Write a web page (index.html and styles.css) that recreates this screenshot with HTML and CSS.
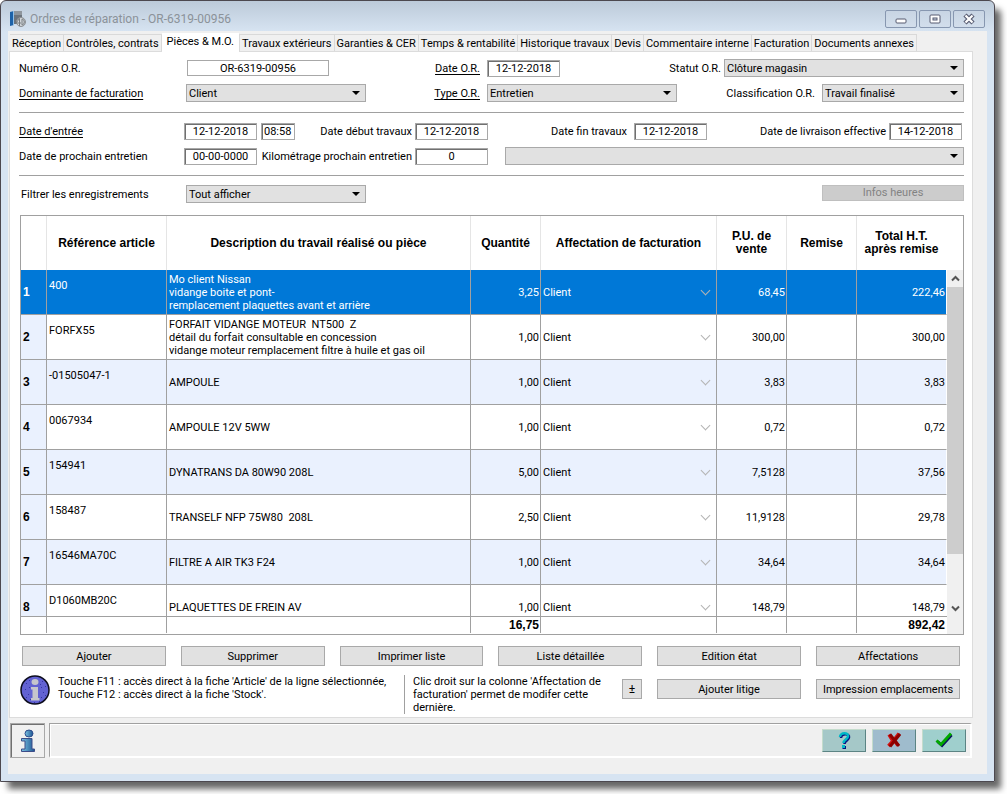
FILE: index.html
```html
<!DOCTYPE html>
<html lang="fr">
<head>
<meta charset="utf-8">
<title>Ordres de réparation - OR-6319-00956</title>
<link rel="stylesheet" href="styles.css">
</head>
<body>
<main class="window">
  <header class="titlebar">
    <svg class="app-icon" width="16" height="18" viewBox="0 0 16 18" aria-hidden="true">
      <path d="M0 2 4 1v14l-4 1z" fill="#1d62a8"/><path d="M3 1h1v14H3z" fill="#8fc0ea"/>
      <path d="M4 1h8v13H4z" fill="#6d747c"/><path d="M4 1h8v4H4z" fill="#8f969d"/>
      <circle cx="11" cy="12" r="4.500" fill="#d4d8dc" stroke="#8b8f93"/>
      <path d="M9.500 8.500 6 13h5M9.500 8.500V16M12 9v6c3 0 3-6 0-6" fill="none" stroke="#777c80"/>
    </svg>
    <h1 class="title">Ordres de réparation - OR-6319-00956</h1>
    <div class="win-controls">
      <button class="win-btn" aria-label="Réduire"><svg width="12" height="12" viewBox="0 0 12 12"><rect x="1" y="6" width="10" height="4" rx="1" fill="#fff" stroke="#565a70"/></svg></button>
      <button class="win-btn" aria-label="Agrandir"><svg width="12" height="12" viewBox="0 0 12 12"><rect x="1" y="2" width="10" height="8" rx="1" fill="#fff" stroke="#565a70"/><rect x="4" y="5" width="4" height="2" fill="#cfdae6" stroke="#565a70"/></svg></button>
      <button class="win-btn" aria-label="Fermer"><svg width="12" height="12" viewBox="0 0 12 12"><path d="M2 2l8 8M10 2l-8 8" stroke="#565a70" stroke-width="4.500"/><path d="M2.500 2.500l7 7M9.500 2.500l-7 7" stroke="#fff" stroke-width="2.200"/></svg></button>
    </div>
  </header>

  <div class="client">
    <nav class="tabs" role="tablist">
      <button class="tab" role="tab">Réception</button>
      <button class="tab" role="tab">Contrôles, contrats</button>
      <button class="tab tab-active" role="tab" aria-selected="true">Pièces &amp; M.O.</button>
      <button class="tab" role="tab">Travaux extérieurs</button>
      <button class="tab" role="tab">Garanties &amp; CER</button>
      <button class="tab" role="tab">Temps &amp; rentabilité</button>
      <button class="tab" role="tab">Historique travaux</button>
      <button class="tab" role="tab">Devis</button>
      <button class="tab" role="tab">Commentaire interne</button>
      <button class="tab" role="tab">Facturation</button>
      <button class="tab" role="tab">Documents annexes</button>
    </nav>

    <section class="panel">
      <div class="row row-number">
        <label for="num">Numéro O.R.</label>
        <input class="field field-flat" id="num" value="OR-6319-00956">
        <label class="end linked" for="dor">Date O.R.</label>
        <input class="field" id="dor" value="12-12-2018">
        <label class="end tight" for="statut">Statut O.R.</label>
        <span class="combo"><select id="statut"><option>Clôture magasin</option></select></span>
      </div>
      <div class="row row-type">
        <label class="linked" for="dom">Dominante de facturation</label>
        <span class="combo"><select id="dom"><option>Client</option></select></span>
        <label class="end linked" for="type">Type O.R.</label>
        <span class="combo"><select id="type"><option>Entretien</option></select></span>
        <label class="end" for="classif">Classification O.R.</label>
        <span class="combo"><select id="classif"><option>Travail finalisé</option></select></span>
      </div>
      <hr class="rule">
      <div class="row row-dates">
        <label class="linked" for="entree">Date d'entrée</label>
        <span class="pair"><input class="field" id="entree" value="12-12-2018"><input class="field field-time" aria-label="Heure d'entrée" value="08:58"></span>
        <label class="end tight" for="debut">Date début travaux</label>
        <input class="field" id="debut" value="12-12-2018">
        <label class="end" for="fin">Date fin travaux</label>
        <input class="field" id="fin" value="12-12-2018">
        <label class="end tight" for="livr">Date de livraison effective</label>
        <input class="field" id="livr" value="14-12-2018">
      </div>
      <div class="row row-next">
        <label for="proch">Date de prochain entretien</label>
        <input class="field" id="proch" value="00-00-0000">
        <label class="end tight" for="km">Kilométrage prochain entretien</label>
        <input class="field" id="km" value="0">
        <span class="combo"><select aria-label="Entretien"><option></option></select></span>
      </div>
      <hr class="rule">
      <div class="row row-filter">
        <label for="filtre">Filtrer les enregistrements</label>
        <span class="combo"><select id="filtre"><option>Tout afficher</option></select></span>
        <button class="btn btn-off" disabled>Infos heures</button>
      </div>

      <div class="grid-box">
        <table class="lines">
          <thead>
            <tr><th></th><th>Référence article</th><th>Description du travail réalisé ou pièce</th><th>Quantité</th><th>Affectation de facturation</th><th>P.U. de<br>vente</th><th>Remise</th><th>Total H.T.<br>après remise</th></tr>
          </thead>
          <tbody>
            <tr class="selected"><th>1</th><td class="ref">400</td><td>Mo client Nissan<br>vidange boite et pont-<br>remplacement plaquettes avant et arrière</td><td class="num">3,25</td><td class="pick"><select aria-label="Affectation 1"><option>Client</option></select></td><td class="num">68,45</td><td></td><td class="num">222,46</td></tr>
            <tr><th>2</th><td class="ref">FORFX55</td><td>FORFAIT VIDANGE MOTEUR&nbsp; NT500&nbsp; Z<br>détail du forfait consultable en concession<br>vidange moteur remplacement filtre à huile et gas oil</td><td class="num">1,00</td><td class="pick"><select aria-label="Affectation 2"><option>Client</option></select></td><td class="num">300,00</td><td></td><td class="num">300,00</td></tr>
            <tr><th>3</th><td class="ref">-01505047-1</td><td>AMPOULE</td><td class="num">1,00</td><td class="pick"><select aria-label="Affectation 3"><option>Client</option></select></td><td class="num">3,83</td><td></td><td class="num">3,83</td></tr>
            <tr><th>4</th><td class="ref">0067934</td><td>AMPOULE 12V 5WW</td><td class="num">1,00</td><td class="pick"><select aria-label="Affectation 4"><option>Client</option></select></td><td class="num">0,72</td><td></td><td class="num">0,72</td></tr>
            <tr><th>5</th><td class="ref">154941</td><td>DYNATRANS DA 80W90 208L</td><td class="num">5,00</td><td class="pick"><select aria-label="Affectation 5"><option>Client</option></select></td><td class="num">7,5128</td><td></td><td class="num">37,56</td></tr>
            <tr><th>6</th><td class="ref">158487</td><td>TRANSELF NFP 75W80&nbsp; 208L</td><td class="num">2,50</td><td class="pick"><select aria-label="Affectation 6"><option>Client</option></select></td><td class="num">11,9128</td><td></td><td class="num">29,78</td></tr>
            <tr><th>7</th><td class="ref">16546MA70C</td><td>FILTRE A AIR TK3 F24</td><td class="num">1,00</td><td class="pick"><select aria-label="Affectation 7"><option>Client</option></select></td><td class="num">34,64</td><td></td><td class="num">34,64</td></tr>
            <tr><th>8</th><td class="ref">D1060MB20C</td><td>PLAQUETTES DE FREIN AV</td><td class="num">1,00</td><td class="pick"><select aria-label="Affectation 8"><option>Client</option></select></td><td class="num">148,79</td><td></td><td class="num">148,79</td></tr>
          </tbody>
          <tfoot>
            <tr><td></td><td></td><td></td><td class="num">16,75</td><td></td><td></td><td></td><td class="num">892,42</td></tr>
          </tfoot>
        </table>
        <div class="scrollbar">
          <button class="scroll-btn" aria-label="Défiler vers le haut"><svg width="9" height="7" viewBox="0 0 9 7"><path d="M1 5.500 4.500 2 8 5.500" fill="none" stroke="#555" stroke-width="2"/></svg></button>
          <div class="thumb"></div>
          <div class="track"></div>
          <button class="scroll-btn" aria-label="Défiler vers le bas"><svg width="9" height="7" viewBox="0 0 9 7"><path d="M1 1.500 4.500 5 8 1.500" fill="none" stroke="#555" stroke-width="2"/></svg></button>
        </div>
      </div>

      <div class="actions">
        <button class="btn">Ajouter</button>
        <button class="btn">Supprimer</button>
        <button class="btn">Imprimer liste</button>
        <button class="btn">Liste détaillée</button>
        <button class="btn">Edition état</button>
        <button class="btn">Affectations</button>
      </div>

      <div class="notes">
        <svg class="info-icon" width="30" height="30" viewBox="0 0 30 30" aria-hidden="true">
          <circle cx="15" cy="15" r="14" fill="#6262d2" stroke="#0c0c1c" stroke-width="1.500"/>
          <g fill="#3434a4"><path d="M6 8h1v1H6zM9 5h1v1H9zM5 14h1v1H5zM8 19h1v1H8zM6 22h1v1H6zM10 24h1v1h-1zM22 6h1v1h-1zM25 11h1v1h-1zM21 12h1v1h-1zM23 17h1v1h-1zM21 22h1v1h-1zM25 20h1v1h-1zM19 26h1v1h-1zM9 12h1v1H9zM20 9h1v1h-1zM14 27h1v1h-1z"/></g>
          <ellipse cx="15" cy="7" rx="3.500" ry="3" fill="#c6c6cc"/>
          <path d="M11 12h7v11h1.500v2.500H11V23h1.500v-8.500H11z" fill="#c6c6cc"/>
        </svg>
        <p class="note-main">Touche F11 : accès direct à la fiche 'Article' de la ligne sélectionnée,<br>Touche F12 : accès direct à la fiche 'Stock'.</p>
        <p class="note-side">Clic droit sur la colonne 'Affectation de facturation' permet de modifer cette dernière.</p>
        <button class="btn btn-mini">±</button>
        <button class="btn">Ajouter litige</button>
        <button class="btn">Impression emplacements</button>
      </div>
    </section>

    <footer class="status">
      <button class="info-btn" aria-label="Informations">
        <svg width="16" height="24" viewBox="0 0 16 24">
          <defs>
            <linearGradient id="blue" x1="0" x2="1"><stop offset="0" stop-color="#7cc4e4"/><stop offset="1" stop-color="#1c5290"/></linearGradient>
          </defs>
          <ellipse cx="9" cy="4.500" rx="4" ry="3.500" fill="url(#blue)" stroke="#2c4c8c"/>
          <path d="M1.500 9.500H12V20h2.500v2.500h-13V20H5v-8H1.500z" fill="url(#blue)" stroke="#3c4c88"/>
        </svg>
      </button>
      <div class="status-box">
        <button class="tool tool-help" aria-label="Aide"><svg width="14" height="18" viewBox="0 0 14 18"><path d="M3 6C3 1 12 1 11 5.500 10.500 8.500 6.500 8.500 6.500 12" transform="translate(1 1)" fill="none" stroke="#0a1080" stroke-width="2.500"/><path d="M3 6C3 1 12 1 11 5.500 10.500 8.500 6.500 8.500 6.500 12" fill="none" stroke="#00b8c8" stroke-width="2.500"/><path d="M5.500 15h3.500v3H5.500z" fill="#0a1080"/><path d="M5 14h3v3H5z" fill="#00b8c8"/></svg></button>
        <button class="tool tool-cancel" aria-label="Annuler"><svg width="14" height="16" viewBox="0 0 14 16"><path d="M1.500 14 6 9 2 2.500M12 1.500 7 8l4 5.500" fill="none" stroke="#d01010" stroke-width="3.500"/><path d="M3 2.500 12 14M13 2 3 14.500" fill="none" stroke="#8c0000" stroke-width="3"/></svg></button>
        <button class="tool tool-ok" aria-label="Valider"><svg width="18" height="16" viewBox="0 0 18 16"><path d="M2.500 9.500 7 13.500 16.500 3" fill="none" stroke="#0a1060" stroke-width="3"/><path d="M1.500 8.500 6 12.500 16 1.500" fill="none" stroke="#00a800" stroke-width="3"/></svg></button>
      </div>
    </footer>
  </div>
</main>
</body>
</html>
```
FILE: styles.css
```css
* { box-sizing: border-box; }

body {
  margin: 0;
  background: #fff;
  color: #000;
  font: 11px/13px Roboto, "Liberation Sans", sans-serif;
}

button, input, select {
  font: inherit;
  color: inherit;
  margin: 0;
  border-radius: 0;
}

p { margin: 0; }

/* Window frame */
.window {
  margin: 0 12px 12px 0;
  padding: 0 7px 7px;
  border: 1px solid #4c484f;
  border-radius: 6px 6px 0 0;
  background: linear-gradient(#bccad9, #d7e4f2 31px);
  box-shadow: 7px 8px 6px -1px rgba(0, 0, 0, .6);
}

.titlebar {
  display: flex;
  align-items: center;
  gap: 4px;
  height: 30px;
  padding: 6px 2px 0;
}

.title {
  flex: 1;
  margin: 0;
  font-size: 12px;
  font-weight: 400;
  color: #8b9299;
}

.win-controls { display: flex; gap: 2px; }

.win-btn {
  display: grid;
  place-items: center;
  width: 32px;
  height: 18px;
  padding: 0;
  border: 1px solid #8797b0;
  border-radius: 2px;
  background: linear-gradient(#c8d5e4, #d2deec);
}

.client {
  padding: 1px 14px 16px 1px;
  background: #f0f0f0;
}

/* Tabs */
.tabs {
  display: flex;
  align-items: flex-end;
  height: 19px;
  margin-right: 30px;
  padding-left: 1px;
}

.tab {
  height: 17px;
  padding: 0 2px;
  border: 1px solid #d9d9d9;
  border-width: 1px 1px 0 0;
  background: #f0f0f0;
  white-space: nowrap;
}

.tab-active {
  height: 19px;
  margin-bottom: -1px;
  padding: 0 5px 3px;
  border-top-color: #fff;
  background: #fff;
  z-index: 1;
}

.panel {
  padding: 7px 8px 3px 9px;
  border: 1px solid #dcdcdc;
  background: #fff;
}

/* Form rows */
.row {
  display: grid;
  align-items: center;
  min-height: 18px;
}

.row-number { grid-template-columns: 168px 142px 158px 73px 1fr 240px; }
.row-type { grid-template-columns: 167px 180px 121px 190px 1fr 142px; margin-top: 7px; }
.row-dates { grid-template-columns: 165px 111px 120px 73px 146px 73px 1fr 73px; padding-right: 2px; }
.row-next { grid-template-columns: 165px 73px 158px 73px 1fr; margin-top: 7px; }
.row-next .combo { margin-left: 17px; }
.row-filter { grid-template-columns: 165px 180px 1fr; padding-left: 2px; }

.end { padding-right: 7px; text-align: right; }
.tight { padding-right: 3px; }

.linked {
  text-decoration: underline;
  text-decoration-skip-ink: none;
  text-underline-offset: 2px;
}

.rule {
  height: 1px;
  margin: 10px 0 9px;
  border: 0;
  background: #a0a0a0;
}

.pair { display: flex; gap: 4px; }
.pair .field { width: 73px; }
.pair .field-time { width: 34px; padding: 0 2px; text-align: left; }

.field {
  width: 100%;
  height: 17px;
  padding: 0;
  border: 1px solid #a8a8a8;
  background: #fff;
  box-shadow: inset 1px 1px 0 #707070;
  text-align: center;
}

.field-flat { height: 16px; box-shadow: none; }

.combo {
  position: relative;
  display: block;
}

.combo select {
  display: block;
  width: 100%;
  height: 18px;
  padding: 0 20px 0 2px;
  border: 1px solid #a9a9a9;
  background: #e1e1e1;
  appearance: none;
}

.combo::after {
  content: "";
  position: absolute;
  top: 7px;
  right: 6px;
  border: 4px solid transparent;
  border-top-color: #000;
  border-bottom: 0;
  pointer-events: none;
}

/* Buttons */
.btn {
  height: 20px;
  padding: 0 4px;
  border: 1px solid #a9a9a9;
  background: #e1e1e1;
  white-space: nowrap;
}

.btn-off {
  width: 142px;
  height: 16px;
  margin-top: -2px;
  line-height: 12px;
  justify-self: end;
  border-color: #bfbfbf;
  background: #ccc;
  color: #838383;
}

/* Repair lines */
.grid-box {
  display: flex;
  margin: 12px 0 0 1px;
  border: 1px solid #a0a0a0;
}

.lines {
  display: block;
  flex: 1;
  min-width: 0;
}

.lines thead, .lines tbody, .lines tfoot { display: block; }

.lines tr {
  display: grid;
  grid-template-columns: 26px 120px 1fr 70px 176px 70px 70px 90px;
}

.lines th, .lines td {
  display: grid;
  align-items: center;
  padding: 1px 2px 0;
  border-right: 1px solid #a0a0a0;
  text-align: left;
}

.lines th, .lines tfoot td {
  font-family: "Liberation Sans", Arial, sans-serif;
  font-size: 12px;
  font-weight: 700;
}

.lines tr > :last-child { border-right-color: #fff; }

.lines thead tr { height: 54px; }

.lines thead th {
  padding: 0;
  border-right-color: #e5e5e5;
  text-align: center;
}

.lines tbody {
  height: 347px;
  overflow: hidden;
  border-bottom: 1px solid #a0a0a0;
}

.lines tbody tr { height: 45px; }
.lines tbody tr:nth-child(odd), .lines tbody th { background: #eaf1fe; }
.lines tbody th, .lines tbody td { border-bottom: 1px solid #a0a0a0; }

.lines tbody tr.selected, .lines tbody .selected th {
  background: #0078d7;
  color: #fff;
}

.lines .ref { align-items: start; padding-top: 9px; }
.lines .num { padding-right: 1px; text-align: right; }

.pick { position: relative; }

.pick select {
  width: 100%;
  padding: 0;
  border: 0;
  background: transparent;
  appearance: none;
}

.pick::after {
  content: "";
  position: absolute;
  top: 17px;
  right: 7px;
  width: 6px;
  height: 6px;
  border: solid #b4b4b4;
  border-width: 0 1px 1px 0;
  transform: rotate(45deg);
}

.lines tfoot { padding-bottom: 1px; }
.lines tfoot tr { height: 16px; }
.lines tfoot td { padding-top: 0; }

.scrollbar {
  display: flex;
  flex-direction: column;
  width: 16px;
  margin-top: 54px;
  padding-bottom: 17px;
  background: #f0f0f0;
}

.scroll-btn {
  display: grid;
  place-items: center;
  height: 17px;
  padding: 0;
  border: 0;
  background: transparent;
}

.thumb { flex: 266; background: #cdcdcd; }
.track { flex: 46; }

/* Actions and notes */
.actions {
  display: grid;
  grid-template-columns: repeat(6, 1fr);
  gap: 15px;
  margin: 11px 4px 0 3px;
}

.notes {
  display: grid;
  grid-template-columns: 30px minmax(0, 1fr) 203px 20px 144px 144px;
  align-items: start;
  gap: 0 15px;
  margin: 9px 4px 0 1px;
}

.notes .btn { margin-top: 4px; }
.note-main { margin-left: -7px; white-space: nowrap; }

.note-side {
  padding-left: 8px;
  border-left: 1px solid #a0a0a0;
}

.btn-mini { padding: 0; font-size: 12px; }

/* Status bar */
.status {
  display: flex;
  gap: 4px;
  margin: 5px 1px 0;
}

.info-btn {
  display: grid;
  place-items: center;
  width: 35px;
  height: 35px;
  padding: 0;
  border: 1px solid #a8a8a8;
  background: #f0f0f0;
  box-shadow: inset 1px 1px 0 #707070;
}

.status-box {
  display: flex;
  flex: 1;
  justify-content: flex-end;
  align-items: center;
  gap: 6px;
  padding-right: 4px;
  border: 1px solid #a0a0a0;
  border-right: 2px solid #fff;
  border-bottom: 2px solid #fff;
  box-shadow: inset 1px 1px 0 #fff;
}

.tool {
  display: grid;
  place-items: center;
  width: 44px;
  height: 23px;
  padding: 0;
  border: 1px solid #c4dccc;
  border-right-color: #5c8484;
  border-bottom-color: #5c8484;
}

.tool-help { background: #a5c8c8; }
.tool-cancel { background: #9fbccd; }
.tool-ok { background: #9fcfcd; }
```
